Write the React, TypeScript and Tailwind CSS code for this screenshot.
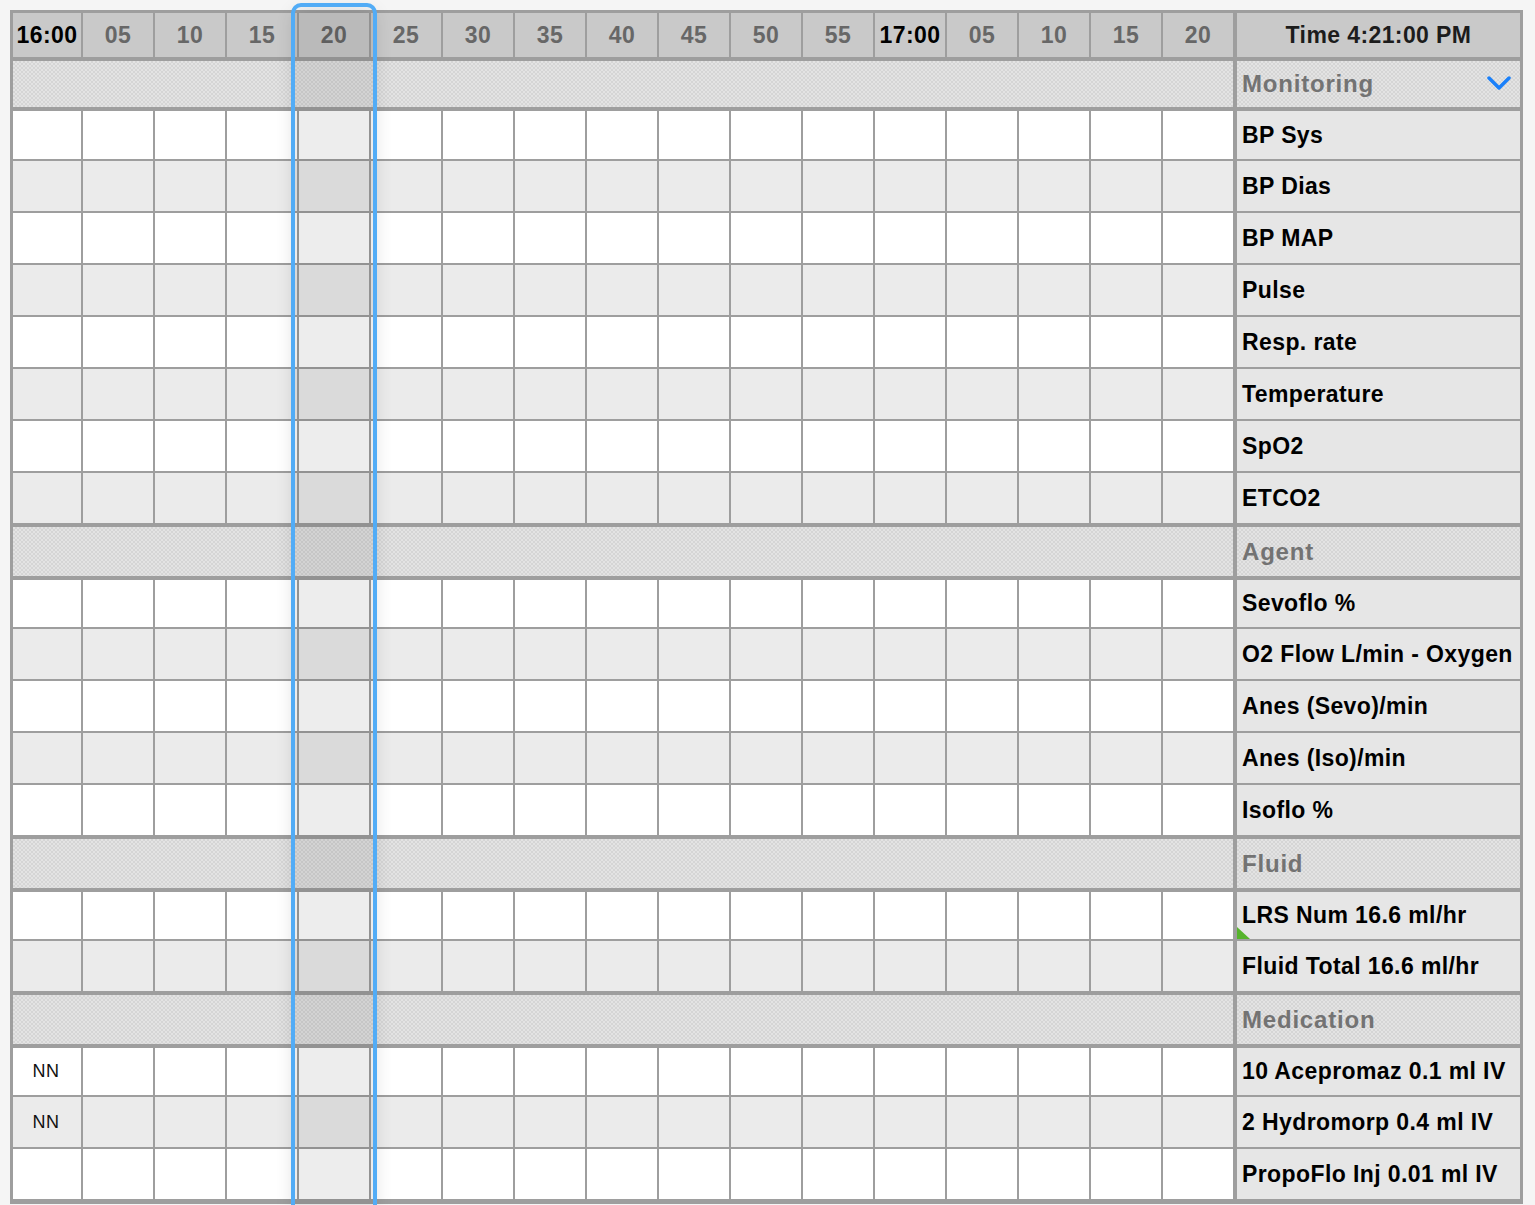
import React from 'react';

const TIMES = ['16:00', '05', '10', '15', '20', '25', '30', '35', '40', '45', '50', '55', '17:00', '05', '10', '15', '20'];

type Row = { label: string; first?: string; flag?: boolean };
type Section = { title: string; chevron?: boolean; rows: Row[] };

const SECTIONS: Section[] = [
  {
    title: 'Monitoring',
    chevron: true,
    rows: [
      { label: 'BP Sys' },
      { label: 'BP Dias' },
      { label: 'BP MAP' },
      { label: 'Pulse' },
      { label: 'Resp. rate' },
      { label: 'Temperature' },
      { label: 'SpO2' },
      { label: 'ETCO2' },
    ],
  },
  {
    title: 'Agent',
    rows: [
      { label: 'Sevoflo %' },
      { label: 'O2 Flow L/min - Oxygen' },
      { label: 'Anes (Sevo)/min' },
      { label: 'Anes (Iso)/min' },
      { label: 'Isoflo %' },
    ],
  },
  {
    title: 'Fluid',
    rows: [{ label: 'LRS Num 16.6 ml/hr', flag: true }, { label: 'Fluid Total 16.6 ml/hr' }],
  },
  {
    title: 'Medication',
    rows: [
      { label: '10 Acepromaz 0.1 ml IV', first: 'NN' },
      { label: '2 Hydromorp 0.4 ml IV', first: 'NN' },
      { label: 'PropoFlo Inj 0.01 ml IV' },
    ],
  },
];

const CHECKER =
  'bg-[image:repeating-conic-gradient(#d5d5d5_0%_25%,#e3e3e3_0%_50%)] bg-[length:4px_4px]';

function Chevron() {
  return (
    <svg width="24" height="14" viewBox="0 0 24 14" className="absolute right-[9px] top-[15px]">
      <polyline points="2,2 12,12 22,2" fill="none" stroke="#1a80fa" strokeWidth="3.5" strokeLinecap="round" strokeLinejoin="round" />
    </svg>
  );
}

function HeaderRow() {
  return (
    <div className="flex gap-[2px] h-[44px] mb-[4px]">
      {TIMES.map((t, i) => {
        const hour = t.includes(':');
        return (
          <div
            key={i}
            className={`${i === 0 ? 'w-[68px]' : 'w-[70px]'} shrink-0 bg-[#c9c9c9] flex items-center justify-center text-[23px] font-bold tracking-[0.4px] ${hour ? 'text-black' : 'text-[#676767]'}`}
          >
            {t}
          </div>
        );
      })}
      <div className="ml-[2px] w-[283px] shrink-0 bg-[#c9c9c9] flex items-center justify-center text-[23px] font-bold tracking-[0.4px] text-[#1c1c1c]">
        Time 4:21:00 PM
      </div>
    </div>
  );
}

function SectionRow({ s, first }: { s: Section; first: boolean }) {
  return (
    <div className={`flex gap-[4px] mb-[4px] ${first ? 'h-[46px]' : 'h-[49px]'}`}>
      <div className={`w-[1220px] shrink-0 ${CHECKER}`} />
      <div className={`relative w-[283px] shrink-0 ${CHECKER} flex items-center pl-[5px] text-[24px] font-bold tracking-[0.8px] text-[#737373]`}>
        {s.title}
        {s.chevron && <Chevron />}
      </div>
    </div>
  );
}

function DataRow({ r, idx, height, space }: { r: Row; idx: number; height: string; space: string }) {
  const bg = idx % 2 === 0 ? 'bg-white' : 'bg-[#ebebeb]';
  return (
    <div className={`flex gap-[2px] ${height} ${space}`}>
      {TIMES.map((_, i) => (
        <div
          key={i}
          className={`${i === 0 ? 'w-[68px]' : 'w-[70px]'} shrink-0 ${bg} flex items-center justify-center pr-[2px] text-[18px] tracking-[0.5px] text-[#111]`}
        >
          {i === 0 ? r.first : null}
        </div>
      ))}
      <div className="relative ml-[2px] w-[283px] shrink-0 bg-[#e6e6e6] flex items-center pl-[5px] text-[23px] font-bold tracking-[0.4px] text-black whitespace-nowrap">
        {r.label}
        {r.flag && (
          <svg width="13" height="12" className="absolute left-0 bottom-0">
            <polygon points="0,0 0,12 13,12" fill="#56b42c" />
          </svg>
        )}
      </div>
    </div>
  );
}

export default function App() {
  return (
    <div className="relative w-[1535px] h-[1205px] overflow-hidden bg-[#f5f5f5] p-[10px] font-['Liberation_Sans',Arial,sans-serif]">
      <div className="w-[1513px] bg-[#9e9e9e] p-[3px] flex flex-col">
        <HeaderRow />
        {SECTIONS.map((s, si) => {
          const lastSection = si === SECTIONS.length - 1;
          return (
            <React.Fragment key={s.title}>
              <SectionRow s={s} first={si === 0} />
              {s.rows.map((r, ri) => {
                const height = ri === 0 ? (si === 0 ? 'h-[48px]' : 'h-[47px]') : 'h-[50px]';
                const lastRow = ri === s.rows.length - 1;
                const space = lastRow && !lastSection ? 'mb-[4px]' : 'mb-[2px]';
                return <DataRow key={r.label} r={r} idx={ri} height={height} space={space} />;
              })}
            </React.Fragment>
          );
        })}
      </div>

      {/* selected time column */}
      <div className="absolute left-[295px] top-[13px] w-[78px] h-[1200px] bg-black/[0.07] shadow-[0_0_18px_rgba(0,0,0,0.16)]" />
      <div className="absolute left-[291px] top-[3px] w-[86px] h-[1220px] border-[4px] border-[#52acf6] rounded-t-[10px]" />
    </div>
  );
}
